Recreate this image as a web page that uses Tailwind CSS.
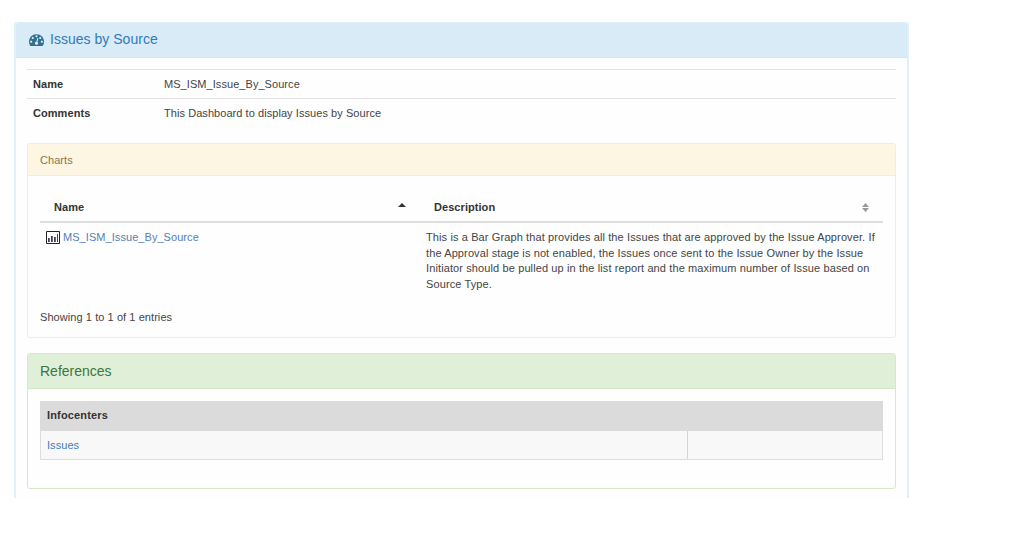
<!DOCTYPE html>
<html lang="en">
<head>
<meta charset="utf-8">
<title>Issues by Source</title>
<script src="https://cdn.jsdelivr.net/npm/@tailwindcss/browser@4"></script>
</head>
<body class="bg-white font-['Liberation_Sans',Arial,sans-serif] text-[11px] leading-[15.7px] tracking-[0.06px] text-[#444] h-[533px] overflow-hidden">
<main class="ml-[14px] mt-[22px] w-[895px] h-[476px] rounded-t-[3px] border-x-2 border-t border-[#dff0f7] bg-[#fefefe]">
  <header class="flex items-center h-[35px] pl-[13px] bg-[#d9ebf6] border-b border-[#cbe8f1] rounded-t-[2px]">
    <svg class="w-[15px] h-[15px] mr-[6px] -mt-[2px]" viewBox="0 0 1792 1792" fill="#31708f"><path d="M384 1152q0-53-37.5-90.5t-90.5-37.5-90.5 37.5-37.5 90.5 37.5 90.5 90.5 37.5 90.5-37.5 37.5-90.5zm192-448q0-53-37.5-90.5t-90.5-37.5-90.5 37.5-37.5 90.5 37.5 90.5 90.5 37.5 90.5-37.5 37.5-90.5zm428 481l101-382q6-26-7.5-48.5t-38.5-29.5-48 6.5-30 39.5l-101 382q-60 5-107 43.5t-63 98.5q-20 77 20 146t117 89 146-20 89-117q16-60-6-117t-72-91zm660-33q0-53-37.5-90.5t-90.5-37.5-90.5 37.5-37.5 90.5 37.5 90.5 90.5 37.5 90.5-37.5 37.5-90.5zm-640-640q0-53-37.5-90.5t-90.5-37.5-90.5 37.5-37.5 90.5 37.5 90.5 90.5 37.5 90.5-37.5 37.5-90.5zm448 192q0-53-37.5-90.5t-90.5-37.5-90.5 37.5-37.5 90.5 37.5 90.5 90.5 37.5 90.5-37.5 37.5-90.5zm320 448q0 261-141 483-19 29-54 29h-1402q-35 0-54-29-141-221-141-483 0-182 71-348t191-286 286-191 348-71 348 71 286 191 191 286 71 348z"/></svg>
    <h1 class="text-[14px] tracking-[0.02px] text-[#337ab7]">Issues by Source</h1>
  </header>
  <div class="px-[11px] pt-[11px]">
    <dl>
      <div class="flex items-center h-[29px] pt-[2px] border-t border-[#e2e2e2] pl-[7px]"><dt class="w-[130px] font-bold text-[#333] -ml-px mr-px">Name</dt><dd>MS_ISM_Issue_By_Source</dd></div>
      <div class="flex items-center h-[29px] pt-[2px] border-t border-[#e2e2e2] pl-[7px]"><dt class="w-[130px] font-bold text-[#333] -ml-px mr-px">Comments</dt><dd>This Dashboard to display Issues by Source</dd></div>
    </dl>
    <section class="mt-[16px] h-[195px] border border-[#faebcc] rounded-[3px]">
      <header class="flex items-center h-[32px] pt-[2px] pl-[12px] bg-[#fcf6e2] border-b border-[#faebcc] text-[#8a7550] rounded-t-[2px]">Charts</header>
      <div class="px-[12px] pt-[16px]">
        <div class="flex items-center h-[31px] pt-[3px] border-b-2 border-[#ddd] font-bold text-[#333]">
          <div class="flex items-center w-[380px] pl-[14px] pr-[14px] justify-between"><span>Name</span><svg class="w-[8px] h-[4px] -mt-[5px]" viewBox="0 0 8 4" fill="#333"><path d="M0 4L4 0L8 4Z"/></svg></div>
          <div class="flex items-center flex-1 pl-[14px] pr-[14px] justify-between"><span>Description</span><svg class="w-[7px] h-[9px]" viewBox="0 0 7 9" fill="#999"><path d="M0 4L3.5 0L7 4ZM0 5H7L3.5 9Z"/></svg></div>
        </div>
        <div class="flex pt-[7px]">
          <div class="flex w-[379px] pl-[6px] text-[#5580b8]"><svg class="w-[14px] h-[13px] mt-px mr-[3px]" viewBox="0 0 14 13"><path d="M.5 .5h13v12H.5z" fill="#fff" stroke="#222"/><path d="M2 7h1v4H2zM5 5h1v6H5zM8 6h1v5H8zM11 3h1v8h-1z" fill="#3b3b7c"/><path d="M3 7h1v4H3zM6 5h1v6H6zM9 6h1v5H9z" fill="#8b5a6b"/></svg><span>MS_ISM_Issue_By_Source</span></div>
          <p class="pl-[7px] whitespace-nowrap tracking-[0.113px]">This is a Bar Graph that provides all the Issues that are approved by the Issue Approver. If<br>the Approval stage is not enabled, the Issues once sent to the Issue Owner by the Issue<br>Initiator should be pulled up in the list report and the maximum number of Issue based on<br>Source Type.</p>
        </div>
        <p class="mt-[17px] tracking-[0.07px]">Showing 1 to 1 of 1 entries</p>
      </div>
    </section>
    <section class="mt-[15px] h-[136px] border border-[#d6e9c6] rounded-[3px]">
      <header class="flex items-center h-[35px] pt-px pl-[12px] bg-[#dfefd8] border-b border-[#d6e9c6] text-[14px] tracking-normal text-[#3c763d] rounded-t-[2px]">References</header>
      <div class="px-[12px] pt-[12px]">
        <div class="flex items-center h-[30px] pl-[7px] bg-[#dbdbdb] font-bold text-[#333] tracking-[0.15px]">Infocenters</div>
        <div class="flex h-[29px] border-x border-b border-[#ddd] bg-[#f8f8f8]">
          <div class="flex items-center w-[647px] pt-[2px] pl-[6px] border-r border-[#d5d5d5] text-[#437db8]">Issues</div>
        </div>
      </div>
    </section>
  </div>
</main>
</body>
</html>
